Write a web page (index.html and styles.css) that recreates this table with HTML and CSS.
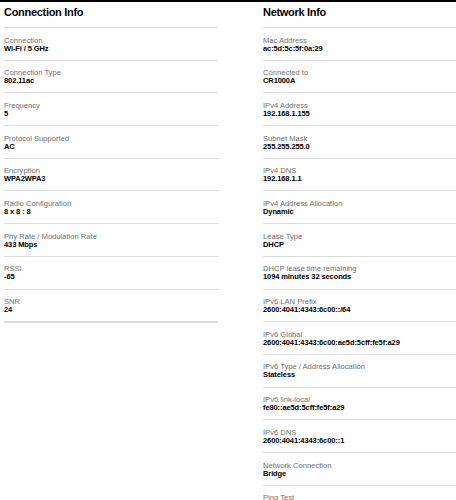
FILE: index.html
```html
<!DOCTYPE html>
<html lang="en">
<head>
<meta charset="utf-8">
<title>Connection and Network Info</title>
<link rel="stylesheet" href="styles.css">
</head>
<body>
<div class="page">
  <section class="col col-left">
    <h2 class="title">Connection Info</h2>
    <dl class="list">
      <div class="row"><dt>Connection</dt><dd>Wi-Fi / 5 GHz</dd></div>
      <div class="row"><dt>Connection Type</dt><dd>802.11ac</dd></div>
      <div class="row"><dt>Frequency</dt><dd>5</dd></div>
      <div class="row"><dt>Protocol Supported</dt><dd>AC</dd></div>
      <div class="row"><dt>Encryption</dt><dd>WPA2WPA3</dd></div>
      <div class="row"><dt>Radio Configuration</dt><dd>8 x 8 : 8</dd></div>
      <div class="row"><dt>Phy Rate / Modulation Rate</dt><dd>433 Mbps</dd></div>
      <div class="row"><dt>RSSI</dt><dd>-65</dd></div>
      <div class="row row-last"><dt>SNR</dt><dd>24</dd></div>
    </dl>
  </section>
  <section class="col col-right">
    <h2 class="title">Network Info</h2>
    <dl class="list">
      <div class="row"><dt>Mac Address</dt><dd>ac:5d:5c:5f:0a:29</dd></div>
      <div class="row"><dt>Connected to</dt><dd>CR1000A</dd></div>
      <div class="row"><dt>IPv4 Address</dt><dd>192.168.1.155</dd></div>
      <div class="row"><dt>Subnet Mask</dt><dd>255.255.255.0</dd></div>
      <div class="row"><dt>IPv4 DNS</dt><dd>192.168.1.1</dd></div>
      <div class="row"><dt>IPv4 Address Allocation</dt><dd>Dynamic</dd></div>
      <div class="row"><dt>Lease Type</dt><dd>DHCP</dd></div>
      <div class="row"><dt>DHCP lease time remaining</dt><dd>1094 minutes 32 seconds</dd></div>
      <div class="row"><dt>IPv6 LAN Prefix</dt><dd>2600:4041:4343:6c00::/64</dd></div>
      <div class="row"><dt>IPv6 Global</dt><dd>2600:4041:4343:6c00:ae5d:5cff:fe5f:a29</dd></div>
      <div class="row"><dt>IPv6 Type / Address Allocation</dt><dd>Stateless</dd></div>
      <div class="row"><dt>IPv6 link-local</dt><dd>fe80::ae5d:5cff:fe5f:a29</dd></div>
      <div class="row"><dt>IPv6 DNS</dt><dd>2600:4041:4343:6c00::1</dd></div>
      <div class="row"><dt>Network Connection</dt><dd>Bridge</dd></div>
      <div class="row"><dt>Ping Test</dt><dd>Run</dd></div>
    </dl>
  </section>
</div>
</body>
</html>
```

FILE: styles.css
```css
html {
  overflow: hidden;
}

body {
  margin: 0;
  background: #ffffff;
  color: #000000;
  font-family: "Liberation Sans", Arial, Helvetica, sans-serif;
}

.page {
  border-top: 2px solid #000000;
  display: grid;
  grid-template-columns: 214px 1fr;
  column-gap: 45px;
  padding-left: 4px;
  align-items: start;
}

.title {
  margin: 0;
  padding: 4px 0 8px;
  font-size: 11px;
  line-height: 13px;
  font-weight: 700;
  letter-spacing: -0.3px;
  border-bottom: 1px solid #dcdede;
}

.list {
  margin: 0;
}

.row {
  padding: 7.6px 0 6.6px;
  border-bottom: 1px solid #dcdede;
}

.row-last {
  border-bottom-width: 2px;
}

.row dt {
  font-size: 7.6px;
  line-height: 9px;
  color: #6f7171;
}

.row dd {
  margin: 0;
  font-size: 7.5px;
  line-height: 8.5px;
  font-weight: 700;
  letter-spacing: -0.1px;
  color: #000000;
}
```
